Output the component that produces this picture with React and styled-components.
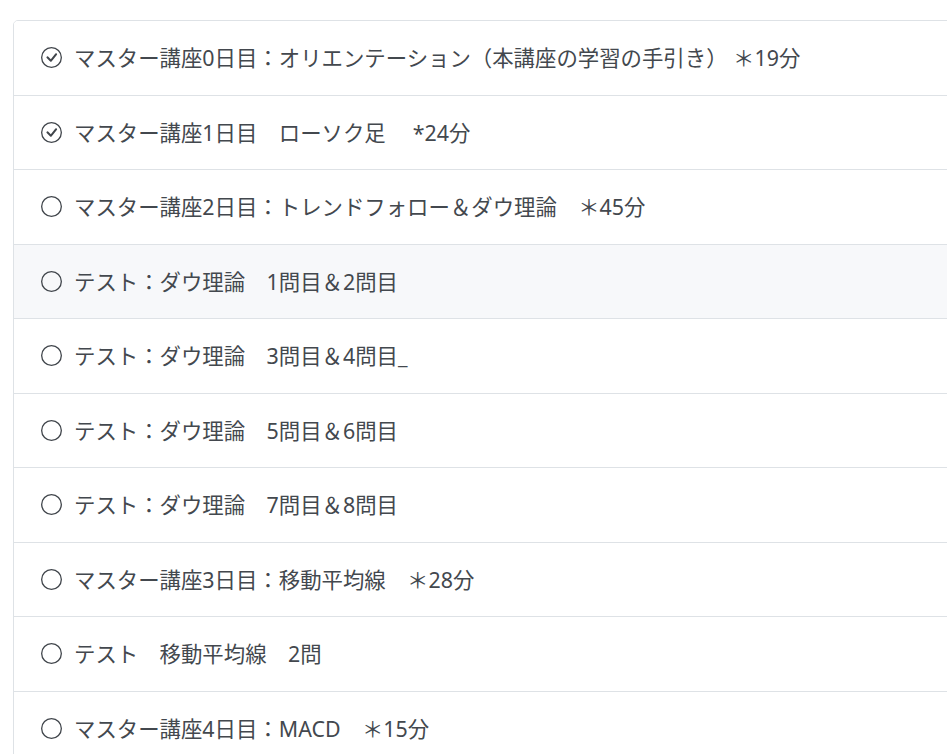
import styled, { createGlobalStyle } from 'styled-components';
import { BsCheckCircle, BsCircle } from 'react-icons/bs';

const lessons = [
    { title: 'マスター講座0日目：オリエンテーション（本講座の学習の手引き） ＊19分', done: true },
    { title: 'マスター講座1日目　ローソク足　 *24分', done: true },
    { title: 'マスター講座2日目：トレンドフォロー＆ダウ理論　＊45分' },
    { title: 'テスト：ダウ理論　1問目＆2問目', active: true },
    { title: 'テスト：ダウ理論　3問目＆4問目_' },
    { title: 'テスト：ダウ理論　5問目＆6問目' },
    { title: 'テスト：ダウ理論　7問目＆8問目' },
    { title: 'マスター講座3日目：移動平均線　＊28分' },
    { title: 'テスト　移動平均線　2問' },
    { title: 'マスター講座4日目：MACD　＊15分' },
];

const App = () => {
    return (
        <>
            <GlobalStyle />
            <Page>
                <LessonList>
                    {
                        lessons.map(lesson => (
                            <Lesson key={lesson.title} active={lesson.active}>
                                <Icon>
                                    {lesson.done ? <BsCheckCircle /> : <BsCircle />}
                                </Icon>
                                <span>{lesson.title}</span>
                            </Lesson>
                        ))
                    }
                </LessonList>
            </Page>
        </>
    )
};

export default App;

const GlobalStyle = createGlobalStyle`
    html, body {
        margin: 0;
        overflow: hidden;
        background: #fff;
    }
    body {
        font-family: 'Noto Sans', 'Noto Sans CJK JP', sans-serif;
    }
`
const Page = styled.div`
    padding: 20px 0 0 13px;
`
const LessonList = styled.ul`
    list-style: none;
    margin: 0;
    padding: 0;
    width: 1000px;
    border: 1px solid #dee2e6;
    border-radius: 5px;
    overflow: hidden;
`
const Lesson = styled.li`
    display: flex;
    align-items: center;
    gap: 12px;
    padding: 21px 27px;
    font-size: 21.4px;
    line-height: 31.5px;
    color: #43484e;
    background: ${props => props.active ? '#f7f8fa' : '#fff'};
    border-bottom: 1px solid #dee2e6;
    white-space: nowrap;
`
const Icon = styled.span`
    display: flex;
    font-size: 21px;
    color: #40454b;
`
